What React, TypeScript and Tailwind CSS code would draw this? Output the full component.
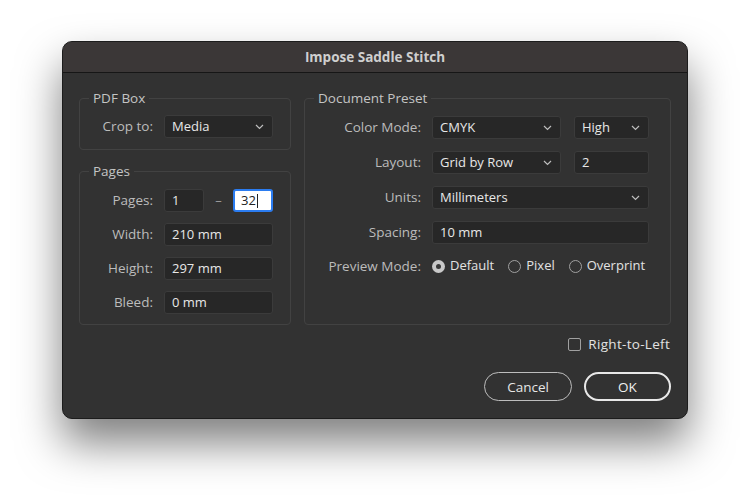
import React from 'react';

const font = { fontFamily: '"Open Sans", "Noto Sans", sans-serif' };

function Chevron() {
  return (
    <svg width="9" height="6" viewBox="0 0 9 6" className="shrink-0">
      <polyline points="1,1 4.5,4.5 8,1" fill="none" stroke="#bdbdbd" strokeWidth="1.2" />
    </svg>
  );
}

function Select({ value, w }: { value: string; w: string }) {
  return (
    <div className={`${w} h-[23px] flex items-center justify-between pl-[7px] pr-[8px] bg-[#272727] border border-[#3b3b3b] rounded-[3px] text-[13px] font-medium text-[#e8e8e8]`}>
      <span>{value}</span>
      <Chevron />
    </div>
  );
}

function Input({ value, w }: { value: string; w: string }) {
  return (
    <div className={`${w} h-[23px] flex items-center pl-[7px] bg-[#272727] border border-[#3b3b3b] rounded-[3px] text-[13px] font-medium text-[#e8e8e8]`}>
      {value}
    </div>
  );
}

function Row({ label, labelW, children }: { label: string; labelW: string; children: React.ReactNode }) {
  return (
    <div className="flex items-center">
      <div className={`${labelW} text-right pr-[11px] text-[13.5px] text-[#bcbcbc]`}>{label}</div>
      {children}
    </div>
  );
}

function Radio({ label, checked }: { label: string; checked?: boolean }) {
  return (
    <div className="flex items-center gap-[5px]">
      {checked ? (
        <div className="w-[13px] h-[13px] rounded-full bg-[#c9c9c9] flex items-center justify-center">
          <div className="w-[5px] h-[5px] rounded-full bg-[#3a3a3a]" />
        </div>
      ) : (
        <div className="w-[13px] h-[13px] rounded-full border border-[#a0a0a0]" />
      )}
      <span className="text-[13px] font-medium text-[#e2e2e2]">{label}</span>
    </div>
  );
}

export default function App() {
  return (
    <div className="w-[750px] h-[500px] bg-white flex justify-center pt-[41px]" style={font}>
      <div className="w-[626px] h-[378px] bg-[#323232] rounded-[10px] border border-[#1c1c1c] shadow-[0_24px_44px_rgba(0,0,0,0.5)] flex flex-col overflow-hidden">
        {/* Title bar */}
        <div className="h-[31px] shrink-0 bg-[#3b3737] border-b border-[#161616] flex items-center justify-center">
          <span className="text-[13.5px] font-bold text-[#cfcfcf]">Impose Saddle Stitch</span>
        </div>

        <div className="flex-1 flex flex-col px-[16px] pt-[17px]">
          <div className="flex gap-[13px]">
            {/* Left column */}
            <div className="w-[212px] flex flex-col gap-[13px]">
              <fieldset className="border border-[#424242] rounded-[4px] h-[60px] px-0 pt-[9px]">
                <legend className="ml-[9px] px-[4px] text-[13.5px] text-[#c4c4c4] leading-[16px]">PDF Box</legend>
                <Row label="Crop to:" labelW="w-[84px]">
                  <Select value="Media" w="w-[109px]" />
                </Row>
              </fieldset>
              <fieldset className="border border-[#424242] rounded-[4px] h-[162px] pt-[10px] flex flex-col">
                <legend className="ml-[9px] px-[4px] text-[13.5px] text-[#c4c4c4] leading-[16px]">Pages</legend>
                <div className="flex flex-col gap-[11px]">
                  <Row label="Pages:" labelW="w-[84px]">
                    <Input value="1" w="w-[40px]" />
                    <span className="w-[29px] text-center text-[13px] text-[#9a9a9a]">–</span>
                    <div className="w-[40px] h-[23px] flex items-center pl-[6px] bg-white border-2 border-[#2b7cf0] rounded-[3px] text-[13px] font-medium text-[#222]">
                      32<span className="w-px h-[14px] bg-[#222] ml-[1px]" />
                    </div>
                  </Row>
                  <Row label="Width:" labelW="w-[84px]">
                    <Input value="210 mm" w="w-[109px]" />
                  </Row>
                  <Row label="Height:" labelW="w-[84px]">
                    <Input value="297 mm" w="w-[109px]" />
                  </Row>
                  <Row label="Bleed:" labelW="w-[84px]">
                    <Input value="0 mm" w="w-[109px]" />
                  </Row>
                </div>
              </fieldset>
            </div>

            {/* Right column */}
            <fieldset className="w-[367px] h-[235px] border border-[#424242] rounded-[4px] pt-[10px]">
              <legend className="ml-[9px] px-[4px] text-[13.5px] text-[#c4c4c4] leading-[16px]">Document Preset</legend>
              <div className="flex flex-col gap-[12px]">
                <Row label="Color Mode:" labelW="w-[127px]">
                  <Select value="CMYK" w="w-[129px]" />
                  <div className="w-[13px]" />
                  <Select value="High" w="w-[75px]" />
                </Row>
                <Row label="Layout:" labelW="w-[127px]">
                  <Select value="Grid by Row" w="w-[129px]" />
                  <div className="w-[13px]" />
                  <Input value="2" w="w-[75px]" />
                </Row>
                <Row label="Units:" labelW="w-[127px]">
                  <Select value="Millimeters" w="w-[217px]" />
                </Row>
                <Row label="Spacing:" labelW="w-[127px]">
                  <Input value="10 mm" w="w-[217px]" />
                </Row>
                <Row label="Preview Mode:" labelW="w-[127px]">
                  <div className="flex items-center gap-[14px]">
                    <Radio label="Default" checked />
                    <Radio label="Pixel" />
                    <Radio label="Overprint" />
                  </div>
                </Row>
              </div>
            </fieldset>
          </div>

          {/* Right-to-left */}
          <div className="flex justify-end items-center gap-[7px] mt-[9px] pr-[1px]">
            <div className="w-[13px] h-[13px] rounded-[2px] border border-[#a0a0a0]" />
            <span className="text-[13.5px] font-medium text-[#e2e2e2] tracking-[0.3px]">Right-to-Left</span>
          </div>

          {/* Buttons */}
          <div className="flex justify-end gap-[12px] mt-[18px]">
            <button className="w-[88px] h-[29px] rounded-full border-[1.5px] border-[#bdbdbd] text-[13.5px] font-medium text-[#e6e6e6]">Cancel</button>
            <button className="w-[87px] h-[29px] rounded-full border-2 border-[#e8e8e8] text-[13.5px] font-medium text-[#f0f0f0]">OK</button>
          </div>
        </div>
      </div>
    </div>
  );
}
